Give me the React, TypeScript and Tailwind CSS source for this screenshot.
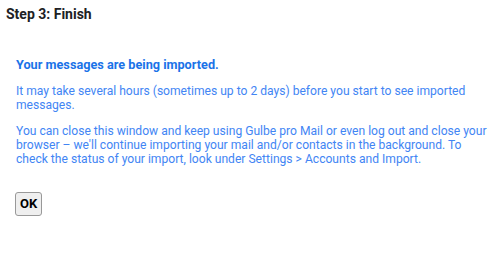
export default function App() {
  return (
    <div className="w-[500px] h-[260px] bg-white font-['Roboto',sans-serif]">
      <h1 className="px-[6px] pt-[5px] text-[14px] leading-[18px] font-bold text-[#202124]">Step 3: Finish</h1>
      <div className="pl-[16px] pr-[4px] pt-[33px] text-[#4285f4]">
        <h2 className="text-[12.7px] leading-[18px] font-bold text-[#1a73e8]">Your messages are being imported.</h2>
        <p className="mt-[10px] max-w-[470px] text-[12.1px] leading-[14px]">
          It may take several hours (sometimes up to 2 days) before you start to see imported messages.
        </p>
        <p className="mt-[12px] text-[12.1px] leading-[14px]">
          You can close this window and keep using Gulbe pro Mail or even log out and close your browser – we'll continue importing your mail and/or contacts in the background. To check the status of your import, look under Settings &gt; Accounts and Import.
        </p>
        <button className="mt-[26px] -ml-[1px] px-[4px] py-[1px] text-[13px] font-bold text-black bg-[#efefef] border border-[#999] rounded-[3px]">OK</button>
      </div>
    </div>
  );
}
